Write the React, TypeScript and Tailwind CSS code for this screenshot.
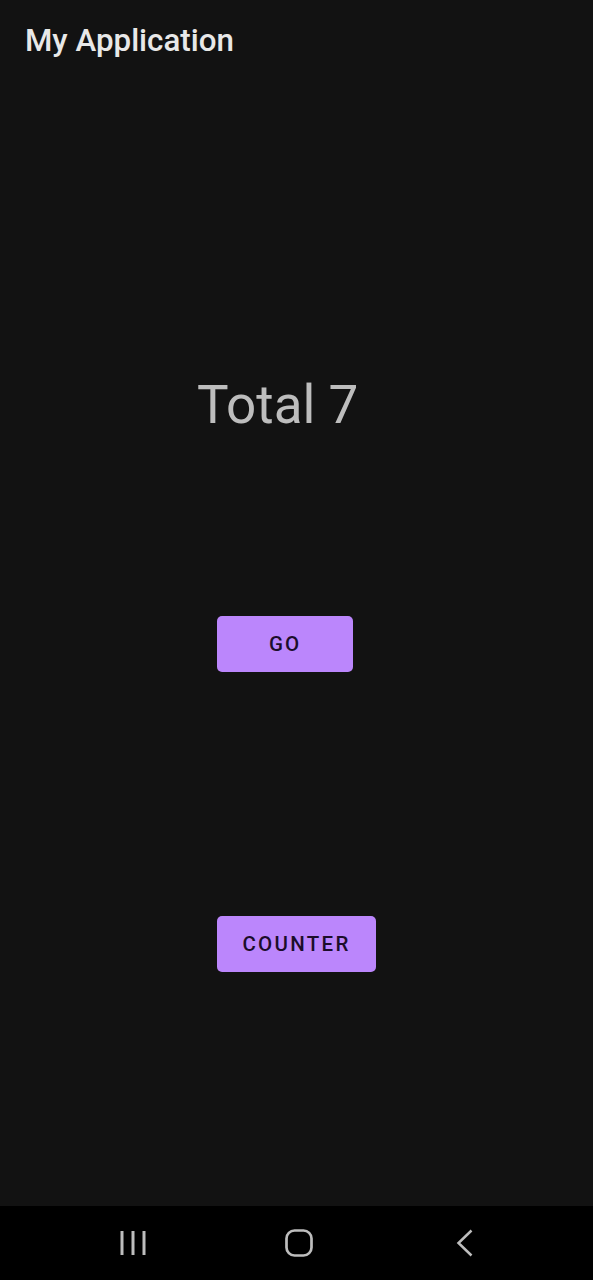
const App = () => {
  return (
    <div
      className="flex flex-col h-[1280px] w-[593px] bg-[#121212] overflow-hidden"
      style={{ fontFamily: "Roboto, 'Noto Sans', sans-serif" }}
    >
      {/* Top bar */}
      <header className="h-[80px] flex items-center px-[25px] pt-[1px]">
        <h1 className="text-[31.3px] font-medium text-[#e8e8e8] leading-none">
          My Application
        </h1>
      </header>

      {/* Content */}
      <main className="flex-1 flex flex-col">
        <div className="mt-[299px] pl-[197px] text-[53px] leading-none text-[#bdbdbd]">
          Total 7
        </div>

        <div className="mt-[184px] pl-[217px]">
          <button className="h-[56px] w-[136px] rounded-[5px] bg-[#bb86fc] text-[#1c0d2b] text-[20.5px] font-medium tracking-[2px]">
            GO
          </button>
        </div>

        <div className="mt-[244px] pl-[217px]">
          <button className="h-[56px] w-[159px] rounded-[5px] bg-[#bb86fc] text-[#1c0d2b] text-[20.5px] font-medium tracking-[2.3px]">
            COUNTER
          </button>
        </div>
      </main>

      {/* Navigation bar */}
      <nav className="h-[74px] bg-black flex items-center pl-[119px]">
        <svg width="28" height="26" viewBox="0 0 28 26" className="text-[#bdbdbd]">
          <path d="M3 1v24M14 1v24M25 1v24" stroke="currentColor" strokeWidth="3" />
        </svg>
        <svg width="30" height="30" viewBox="0 0 30 30" className="ml-[137px] text-[#bdbdbd]">
          <rect x="2.5" y="2.5" width="25" height="25" rx="8" fill="none" stroke="currentColor" strokeWidth="2.7" />
        </svg>
        <svg width="20" height="28" viewBox="0 0 20 28" className="ml-[141px] text-[#bdbdbd]">
          <path d="M16.5 1.5 3.5 14l13 12.5" fill="none" stroke="currentColor" strokeWidth="2.5" />
        </svg>
      </nav>
    </div>
  );
};

export default App;
